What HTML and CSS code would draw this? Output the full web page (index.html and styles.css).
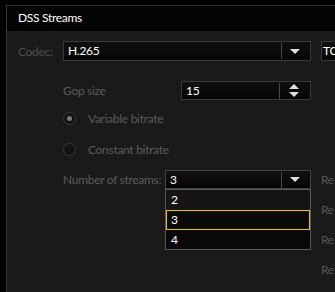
FILE: index.html
```html
<!DOCTYPE html>
<html lang="en">
<head>
    <meta charset="UTF-8">
    <title>DSS Streams</title>
    <link rel="stylesheet" href="styles.css">
</head>
<body>
    <div class="frame">
        <div class="header">DSS Streams</div>
        <div class="panel">
            <div class="row row-codec">
                <label class="lbl lbl-codec">Codec:</label>
                <div class="combo combo-codec">
                    <span class="value">H.265</span>
                    <span class="sep"></span>
                    <span class="arrow-down"></span>
                </div>
                <div class="combo combo-side"><span class="value">TC</span></div>
            </div>

            <div class="row row-gop">
                <label class="lbl lbl-gop">Gop size</label>
                <div class="combo combo-gop">
                    <span class="value">15</span>
                    <span class="sep"></span>
                    <span class="spin">
                        <span class="arrow-up"></span>
                        <span class="spin-line"></span>
                        <span class="arrow-down"></span>
                    </span>
                </div>
            </div>

            <div class="row row-radio">
                <span class="radio checked"></span>
                <span class="radio-text">Variable bitrate</span>
            </div>
            <div class="row row-radio row-radio2">
                <span class="radio"></span>
                <span class="radio-text">Constant bitrate</span>
            </div>

            <div class="row row-streams">
                <label class="lbl lbl-streams">Number of streams:</label>
                <div class="combo combo-streams">
                    <span class="value">3</span>
                    <span class="sep"></span>
                    <span class="arrow-down"></span>
                    <ul class="dropdown">
                        <li>2</li>
                        <li class="selected">3</li>
                        <li class="last">4</li>
                    </ul>
                </div>
                <span class="side-lbl">Re</span>
            </div>
            <div class="row row-side"><span class="side-lbl">Re</span></div>
            <div class="row row-side"><span class="side-lbl">Re</span></div>
            <div class="row row-side"><span class="side-lbl">Re</span></div>
        </div>
    </div>
</body>
</html>
```

FILE: styles.css
```css
html, body {
    margin: 0;
    padding: 0;
    background-color: #000;
    height: 100%;
    overflow: hidden;
}

body {
    font-family: Lato, "Open Sans", Arial, sans-serif;
    font-size: 12px;
    letter-spacing: -0.3px;
}

.frame {
    margin: 5px 0 0 6px;
    border-top: 1px solid #333;
    border-left: 1px solid #333;
    height: 100%;
    overflow: hidden;
}

.header {
    height: 25px;
    line-height: 24px;
    padding-left: 11px;
    color: #fff;
    background-color: #040404;
}

.panel {
    background-color: #1a1a1a;
    height: 100%;
    padding: 10px 0 0 11px;
    white-space: nowrap;
}

.row {
    display: flex;
    align-items: center;
}

.row > * {
    flex-shrink: 0;
}

.lbl {
    color: #5c5c5c;
}

.lbl-codec {
    width: 45px;
    color: #4e4e4e;
}

.combo {
    position: relative;
    display: flex;
    align-items: center;
    box-sizing: border-box;
    height: 20px;
    border: 1px solid #3a3a3a;
    background: linear-gradient(#101010, #060606);
    color: #fff;
}

.combo .value {
    flex: 1;
    padding-left: 4px;
    line-height: 18px;
}

.combo-codec {
    width: 248px;
}

.combo-side {
    width: 40px;
    margin-left: 10px;
    overflow: hidden;
}

.combo-side .value {
    padding-left: 1px;
}

.sep {
    width: 1px;
    height: 16px;
    background-color: #4a4a4a;
    margin-right: 8px;
}

.arrow-down {
    width: 0;
    height: 0;
    border-left: 5px solid transparent;
    border-right: 5px solid transparent;
    border-top: 5px solid #e0e0e0;
    margin-right: 10px;
}

.arrow-up {
    width: 0;
    height: 0;
    border-left: 5px solid transparent;
    border-right: 5px solid transparent;
    border-bottom: 5px solid #e0e0e0;
}

.spin {
    display: flex;
    flex-direction: column;
    align-items: center;
    margin-right: 10px;
}

.spin .arrow-down {
    margin-right: 0;
}

.spin-line {
    width: 12px;
    height: 1px;
    background-color: #101010;
    margin: 1px 0;
}

.row-gop {
    margin: 20px 0 0 45px;
}

.lbl-gop {
    width: 118px;
}

.combo-gop {
    width: 130px;
    height: 19px;
}

.row-radio {
    margin: 8px 0 0 45px;
    height: 20px;
}

.row-radio2 {
    margin-top: 11px;
}

.radio {
    box-sizing: border-box;
    width: 13px;
    height: 13px;
    border-radius: 50%;
    border: 1px solid #3a3a3a;
    background-color: #141414;
    display: flex;
    align-items: center;
    justify-content: center;
}

.radio.checked::after {
    content: "";
    width: 5px;
    height: 5px;
    border-radius: 50%;
    background-color: #7a7a7a;
}

.radio-text {
    margin-left: 12px;
    color: #5c5c5c;
}

.row-streams {
    margin: 11px 0 0 45px;
}

.lbl-streams {
    width: 102px;
}

.combo-streams {
    width: 146px;
    height: 19px;
    border-color: #444;
}

.side-lbl {
    margin-left: 10px;
    color: #555;
}

.row-side {
    padding-left: 293px;
    margin-top: 10px;
    height: 20px;
}

.dropdown {
    position: absolute;
    top: 18px;
    left: -1px;
    width: 146px;
    box-sizing: border-box;
    margin: 0;
    padding: 0;
    list-style: none;
    border: 1px solid #5a5a5a;
    background-color: #151515;
}

.dropdown li {
    height: 20px;
    line-height: 20px;
    padding-left: 5px;
    box-sizing: border-box;
}

.dropdown li.selected {
    border: 1px solid #f0c400;
    background-color: #0a0a0a;
    line-height: 18px;
    padding-left: 4px;
}

.dropdown li.last {
    background-color: #080808;
    height: 19px;
}
```
